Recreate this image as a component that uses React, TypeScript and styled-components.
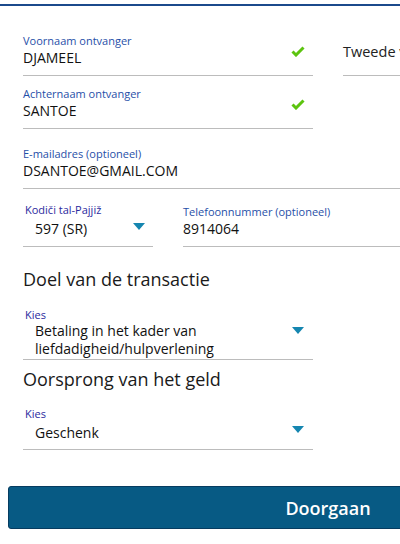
import React from "react";
import styled, { createGlobalStyle } from "styled-components";

const GlobalStyle = createGlobalStyle`
  html, body {
    margin: 0;
    padding: 0;
    overflow: hidden;
    background: #ffffff;
  }
  body {
    font-family: "Open Sans", "Liberation Sans", sans-serif;
    color: #111;
  }
`;

const Page = styled.div`
  width: 400px;
  height: 538px;
  overflow: hidden;
  border-top: 2px solid #1b4a8c;
  margin-top: 4px;
  box-sizing: border-box;
`;

const Form = styled.div`
  display: flex;
  flex-direction: column;
  padding: 28px 0 0 23px;
`;

const Row = styled.div<{ $top?: number; $gap?: number }>`
  display: flex;
  flex-flow: row nowrap;
  align-items: flex-start;
  gap: ${(p) => p.$gap ?? 30}px;
  margin-top: ${(p) => p.$top ?? 0}px;
`;

const Field = styled.div<{ $width?: number; $pad?: number }>`
  position: relative;
  display: flex;
  flex-direction: column;
  border-bottom: 1px solid #bcbcbc;
  padding-bottom: ${(p) => p.$pad ?? 7}px;
  ${(p) => (p.$width ? `width: ${p.$width}px; flex: none;` : "flex: 1;")}
`;

const Label = styled.span<{ $select?: boolean; $top?: number }>`
  font-size: 11px;
  line-height: 14px;
  color: ${(p) => (p.$select ? "#2b2a9e" : "#1f4fa8")};
  padding-left: ${(p) => (p.$select ? 2 : 0)}px;
  margin-top: ${(p) => p.$top ?? 0}px;
`;

const Value = styled.span<{ $select?: boolean; $top?: number }>`
  font-size: 14px;
  line-height: 20px;
  color: #111;
  margin-top: ${(p) => p.$top ?? 0}px;
  padding-left: ${(p) => (p.$select ? 12 : 0)}px;
  padding-right: ${(p) => (p.$select ? 60 : 0)}px;
`;

const MultiValue = styled(Value)`
  line-height: 17.5px;
`;

const Placeholder = styled.span`
  font-size: 14.5px;
  line-height: 20px;
  color: #222;
  margin-top: 8px;
  padding-bottom: 6px;
  white-space: nowrap;
`;

const Check = styled.svg`
  position: absolute;
  right: 8px;
  top: 12px;
`;

const Caret = styled.span<{ $right: number; $top: number }>`
  position: absolute;
  right: ${(p) => p.$right}px;
  top: ${(p) => p.$top}px;
  width: 0;
  height: 0;
  border-left: 6px solid transparent;
  border-right: 6px solid transparent;
  border-top: 7px solid #1586b0;
`;

const Heading = styled.h2<{ $top: number }>`
  margin: ${(p) => p.$top}px 0 0;
  font-size: 18px;
  line-height: 24px;
  font-weight: 400;
  color: #1a1a1a;
`;

const Button = styled.button`
  display: block;
  margin: 36px 0 0 8px;
  width: 640px;
  height: 43px;
  background: #075a84;
  border: 1px solid #063c60;
  border-radius: 3px;
  color: #ffffff;
  font-family: "Open Sans", "Liberation Sans", sans-serif;
  font-size: 18px;
  font-weight: 600;
  text-align: center;
  padding: 0;
  cursor: pointer;
`;

const CheckMark = () => (
  <Check width="14" height="11" viewBox="0 0 14 11">
    <polyline
      points="1.5,5.5 5,9 12.5,1.5"
      fill="none"
      stroke="#5cc40f"
      strokeWidth="3"
    />
  </Check>
);

const App: React.FC = () => (
  <Page>
    <GlobalStyle />
    <Form>
      <Row>
        <Field $width={290}>
          <Label>Voornaam ontvanger</Label>
          <Value>DJAMEEL</Value>
          <CheckMark />
        </Field>
        <Field>
          <Placeholder>Tweede voornaam</Placeholder>
        </Field>
      </Row>
      <Row $top={11}>
        <Field $width={290}>
          <Label>Achternaam ontvanger</Label>
          <Value>SANTOE</Value>
          <CheckMark />
        </Field>
      </Row>
      <Row $top={18}>
        <Field>
          <Label>E-mailadres (optioneel)</Label>
          <Value>DSANTOE@GMAIL.COM</Value>
        </Field>
      </Row>
      <Row $top={14}>
        <Field $width={130}>
          <Label $select>Kodiči tal-Pajjiž</Label>
          <Value $select $top={2}>
            597 (SR)
          </Value>
          <Caret $right={8} $top={20} />
        </Field>
        <Field>
          <Label $top={2}>Telefoonnummer (optioneel)</Label>
          <Value>8914064</Value>
        </Field>
      </Row>

      <Heading $top={20}>Doel van de transactie</Heading>
      <Row $top={17}>
        <Field $width={290} $pad={2}>
          <Label $select>Kies</Label>
          <MultiValue $select>
            Betaling in het kader van
            <br />
            liefdadigheid/hulpverlening
          </MultiValue>
          <Caret $right={9} $top={19} />
        </Field>
      </Row>

      <Heading $top={7}>Oorsprong van het geld</Heading>
      <Row $top={16}>
        <Field $width={290} $pad={6}>
          <Label $select>Kies</Label>
          <Value $select $top={2}>
            Geschenk
          </Value>
          <Caret $right={9} $top={19} />
        </Field>
      </Row>
    </Form>
    <Button>Doorgaan</Button>
  </Page>
);

export default App;
